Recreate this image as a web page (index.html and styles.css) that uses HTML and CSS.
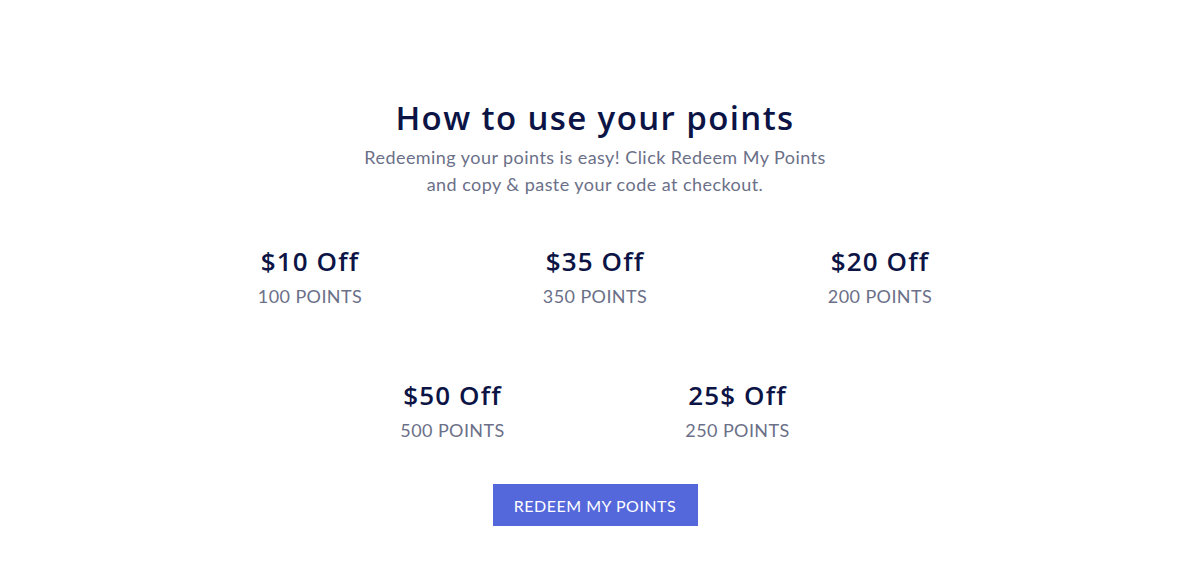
FILE: index.html
```html
<!DOCTYPE html>
<html lang="en">
<head>
    <meta charset="UTF-8">
    <meta name="viewport" content="width=device-width, initial-scale=1.0">
    <title>How to use your points</title>
    <link rel="stylesheet" href="styles.css">
</head>
<body>
    <section class="points">
        <h2 class="points-title">How to use your points</h2>
        <p class="points-intro">Redeeming your points is easy! Click Redeem My Points<br>and copy &amp; paste your code at checkout.</p>

        <div class="rewards">
            <div class="reward">
                <div class="reward-value">$10 Off</div>
                <div class="reward-cost">100 Points</div>
            </div>
            <div class="reward">
                <div class="reward-value">$35 Off</div>
                <div class="reward-cost">350 Points</div>
            </div>
            <div class="reward">
                <div class="reward-value">$20 Off</div>
                <div class="reward-cost">200 Points</div>
            </div>
            <div class="reward">
                <div class="reward-value">$50 Off</div>
                <div class="reward-cost">500 Points</div>
            </div>
            <div class="reward">
                <div class="reward-value">25$ Off</div>
                <div class="reward-cost">250 Points</div>
            </div>
        </div>

        <button class="redeem-btn">Redeem My Points</button>
    </section>
</body>
</html>
```

FILE: styles.css
```css
body {
    margin: 0;
    background: #ffffff;
    font-family: "Lato", "Open Sans", sans-serif;
}
.points {
    display: flex;
    flex-direction: column;
    align-items: center;
    padding: 97px 6px 0 0;
}
.points-title {
    margin: 0;
    font-family: "Open Sans", sans-serif;
    font-weight: 600;
    font-size: 33px;
    line-height: 42px;
    letter-spacing: 1.4px;
    color: #0c1445;
}
.points-intro {
    margin: 5px 0 0;
    font-size: 18px;
    line-height: 27px;
    letter-spacing: 0.45px;
    text-align: center;
    color: #6b7088;
}
.rewards {
    display: flex;
    flex-wrap: wrap;
    justify-content: center;
    width: 855px;
    margin-top: 45px;
    row-gap: 64px;
}
.reward {
    width: 285px;
    text-align: center;
}
.reward-value {
    font-family: "Open Sans", sans-serif;
    font-weight: 600;
    font-size: 26px;
    line-height: 36px;
    letter-spacing: 1.1px;
    color: #0c1445;
}
.reward-cost {
    font-size: 18px;
    line-height: 34px;
    letter-spacing: 0.4px;
    text-transform: uppercase;
    color: #6b7088;
}
.redeem-btn {
    margin-top: 37px;
    width: 205px;
    height: 42px;
    border: none;
    background: #5468db;
    color: #ffffff;
    font-family: "Lato", sans-serif;
    font-size: 16px;
    letter-spacing: 0.5px;
    text-transform: uppercase;
    cursor: pointer;
}
```
